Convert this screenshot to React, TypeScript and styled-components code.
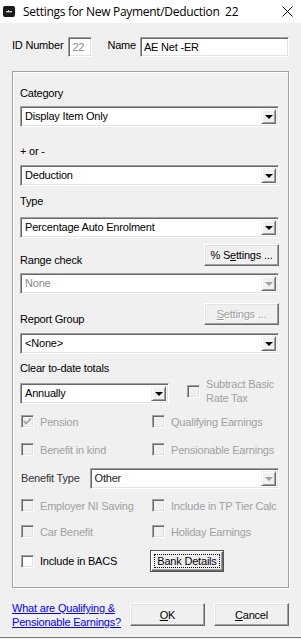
import { ReactNode } from "react";
import styled, { createGlobalStyle } from "styled-components";

const Global = createGlobalStyle`
  html, body {
    margin: 0;
    padding: 0;
    background: #f0f0f0;
  }
  body {
    font-family: "Liberation Sans", Arial, sans-serif;
    font-size: 11px;
    letter-spacing: -0.2px;
    color: #000;
  }
`;

const Window = styled.div`
  width: 301px;
  height: 638px;
  box-sizing: border-box;
  border-bottom: 1px solid #7a7a7a;
  background: #f0f0f0;
  display: flex;
  flex-direction: column;
`;

const TitleBar = styled.div`
  height: 23px;
  flex: none;
  background: #fff;
  display: flex;
  align-items: center;
  padding: 0 8px 0 3px;
  box-sizing: border-box;
`;

const TitleText = styled.div`
  font-family: "Open Sans", "Noto Sans", sans-serif;
  font-size: 12px;
  letter-spacing: -0.3px;
  margin-left: 8px;
  flex: 1;
`;

const Body = styled.div`
  display: flex;
  flex-direction: column;
  padding: 14px 12px 0 12px;
`;

const HeaderRow = styled.div`
  display: flex;
  align-items: flex-start;
  height: 21px;
  flex: none;
`;

const Text = styled.span<{ $mt?: number; $ml?: number; $color?: string }>`
  display: block;
  flex: none;
  line-height: 13px;
  white-space: nowrap;
  margin-top: ${(p) => p.$mt ?? 0}px;
  margin-left: ${(p) => p.$ml ?? 0}px;
  color: ${(p) => p.$color ?? "#000"};
`;

const Edit = styled.div<{ $width?: number; $color?: string }>`
  box-sizing: border-box;
  height: 20px;
  ${(p) => (p.$width ? `width: ${p.$width}px; flex: none;` : "flex: 1;")}
  background: #fff;
  border-style: solid;
  border-width: 1px;
  border-color: #a0a0a0 #fff #fff #a0a0a0;
  box-shadow: inset 1px 1px 0 #696969, inset -1px -1px 0 #e3e3e3;
  padding: 3px 0 0 3px;
  line-height: 13px;
  color: ${(p) => p.$color ?? "#000"};
`;

const Group = styled.div`
  margin-top: 13px;
  height: 517px;
  flex: none;
  box-sizing: border-box;
  border: 1px solid #a0a0a0;
  box-shadow: inset 1px 1px 0 #fff, 1px 1px 0 #fff;
  padding: 15px 9px 0 7px;
  display: flex;
  flex-direction: column;
`;

const ComboBox = styled.div<{ $mt?: number; $width?: number; $ml?: number; $grow?: boolean }>`
  box-sizing: border-box;
  height: 21px;
  margin-top: ${(p) => p.$mt ?? 0}px;
  margin-left: ${(p) => p.$ml ?? 0}px;
  ${(p) => (p.$width ? `width: ${p.$width}px;` : "")}
  flex: ${(p) => (p.$grow ? "1 1 0" : "none")};
  background: #fff;
  border-style: solid;
  border-width: 1px;
  border-color: #a0a0a0 #fff #fff #a0a0a0;
  box-shadow: inset 1px 1px 0 #696969, inset -1px -1px 0 #e3e3e3;
  padding: 2px;
  display: flex;
  align-items: stretch;
`;

const ComboValue = styled.div<{ $color?: string }>`
  flex: 1;
  padding-left: 2px;
  line-height: 15px;
  color: ${(p) => p.$color ?? "#000"};
  white-space: nowrap;
  overflow: hidden;
`;

const ArrowButton = styled.div`
  width: 15px;
  box-sizing: border-box;
  background: #f0f0f0;
  border-style: solid;
  border-width: 1px;
  border-color: #f0f0f0 #696969 #696969 #f0f0f0;
  box-shadow: inset 1px 1px 0 #fff, inset -1px -1px 0 #a0a0a0;
  display: flex;
  align-items: center;
  justify-content: center;
`;

const Triangle = styled.div<{ $disabled?: boolean }>`
  width: 0;
  height: 0;
  border-left: 4px solid transparent;
  border-right: 4px solid transparent;
  border-top: 4px solid ${(p) => (p.$disabled ? "#a0a0a0" : "#000")};
  margin-top: 1px;
`;

const Button = styled.div<{ $width?: number; $height?: number; $disabled?: boolean }>`
  box-sizing: border-box;
  width: ${(p) => p.$width ?? 75}px;
  height: ${(p) => p.$height ?? 23}px;
  background: #f0f0f0;
  border-style: solid;
  border-width: 1px;
  border-color: #fff #696969 #696969 #fff;
  box-shadow: inset -1px -1px 0 #a0a0a0, inset 1px 1px 0 #e3e3e3;
  display: flex;
  align-items: center;
  justify-content: center;
  color: ${(p) => (p.$disabled ? "#a0a0a0" : "#000")};
  text-shadow: ${(p) => (p.$disabled ? "1px 1px 0 #fff" : "none")};
  flex: none;
`;

const DefaultButton = styled(Button)`
  border: 1px solid #555;
  box-shadow: inset 1px 1px 0 #fff, inset -1px -1px 0 #696969, inset -2px -2px 0 #a0a0a0;
  padding: 3px;
`;

const Focus = styled.span`
  display: flex;
  align-items: center;
  justify-content: center;
  width: 100%;
  height: 100%;
  box-sizing: border-box;
  outline: 1px dotted #000;
  outline-offset: -1px;
`;

const Key = styled.u`
  text-decoration: underline;
  text-underline-offset: 1px;
`;

const Row = styled.div<{ $mt?: number; $align?: string; $justify?: string }>`
  display: flex;
  flex: none;
  align-items: ${(p) => p.$align ?? "center"};
  justify-content: ${(p) => p.$justify ?? "space-between"};
  margin-top: ${(p) => p.$mt ?? 0}px;
`;

const CheckGrid = styled.div<{ $mt?: number; $first?: number }>`
  display: grid;
  flex: none;
  grid-template-columns: ${(p) => p.$first ?? 131}px 1fr;
  margin-top: ${(p) => p.$mt ?? 0}px;
  align-items: center;
`;

const CheckItem = styled.div<{ $disabled?: boolean }>`
  display: flex;
  align-items: center;
  height: 13px;
  padding-left: 1px;
  color: ${(p) => (p.$disabled ? "#a0a0a0" : "#000")};
  white-space: nowrap;
`;

const Box = styled.div<{ $disabled?: boolean }>`
  width: 13px;
  height: 13px;
  box-sizing: border-box;
  flex: none;
  background: ${(p) => (p.$disabled ? "#f0f0f0" : "#fff")};
  border-style: solid;
  border-width: 1px;
  border-color: #a0a0a0 #fff #fff #a0a0a0;
  box-shadow: inset 1px 1px 0 #696969, inset -1px -1px 0 #e3e3e3;
  margin-right: 6px;
  display: flex;
  align-items: center;
  justify-content: center;
`;

const TwoLine = styled.span`
  display: block;
  margin-top: -6px;
  line-height: 14px;
  color: #a0a0a0;
  white-space: nowrap;
`;

const Footer = styled.div`
  display: flex;
  align-items: flex-start;
`;

const Link = styled.a`
  display: block;
  margin-top: 13px;
  color: #0000ff;
  text-decoration: underline;
  line-height: 14px;
  white-space: nowrap;
`;

const Buttons = styled.div`
  display: flex;
  gap: 9px;
  margin-left: auto;
  margin-top: 15px;
`;

const AppIcon = () => (
  <svg width="12" height="11" viewBox="0 0 12 11">
    <rect x="0" y="0" width="12" height="11" rx="2" fill="#1a1a1a" />
    <rect x="3" y="5" width="6" height="1.4" fill="#cfcfcf" />
    <rect x="5" y="4" width="1" height="1" fill="#cfcfcf" />
  </svg>
);

const CloseIcon = () => (
  <svg width="11" height="11" viewBox="0 0 11 11">
    <path d="M0.5 0.5 L10.5 10.5 M10.5 0.5 L0.5 10.5" stroke="#000" strokeWidth="1" />
  </svg>
);

const CheckMark = () => (
  <svg width="9" height="9" viewBox="0 0 9 9">
    <path d="M1 4 L3 6.5 L8 1.5" stroke="#a0a0a0" strokeWidth="1.6" fill="none" />
  </svg>
);

function Combo({
  value,
  mt,
  width,
  ml,
  grow,
  disabled,
  color,
}: {
  value: string;
  mt?: number;
  width?: number;
  ml?: number;
  grow?: boolean;
  disabled?: boolean;
  color?: string;
}) {
  return (
    <ComboBox $mt={mt} $width={width} $ml={ml} $grow={grow}>
      <ComboValue $color={color}>{value}</ComboValue>
      <ArrowButton>
        <Triangle $disabled={disabled} />
      </ArrowButton>
    </ComboBox>
  );
}

function Check({
  label,
  disabled,
  checked,
}: {
  label: ReactNode;
  disabled?: boolean;
  checked?: boolean;
}) {
  return (
    <CheckItem $disabled={disabled}>
      <Box $disabled={disabled}>{checked && <CheckMark />}</Box>
      {label}
    </CheckItem>
  );
}

const RowLabel = styled(Text)`
  margin-bottom: -1px;
`;

export default function App() {
  return (
    <>
      <Global />
      <Window>
        <TitleBar>
          <AppIcon />
          <TitleText>Settings for New Payment/Deduction&nbsp; 22</TitleText>
          <CloseIcon />
        </TitleBar>
        <Body>
          <HeaderRow>
            <Text $mt={2}>ID Number</Text>
            <Edit $width={24} $color="#8a8a8a" style={{ marginLeft: 5 }}>
              22
            </Edit>
            <Text $mt={2} $ml={15}>
              Name
            </Text>
            <Edit style={{ marginLeft: 4 }}>AE Net -ER</Edit>
          </HeaderRow>

          <Group>
            <Text>Category</Text>
            <Combo mt={6} value="Display Item Only" />
            <Text $mt={18}>+ or -</Text>
            <Combo mt={7} value="Deduction" />
            <Text $mt={9}>Type</Text>
            <Combo mt={9} value="Percentage Auto Enrolment" />

            <Row $mt={6} $align="flex-end">
              <RowLabel>Range check</RowLabel>
              <Button $height={22}>
                %&nbsp;S<Key>e</Key>ttings ...
              </Button>
            </Row>
            <Combo mt={7} value="None" disabled color="#8a8a8a" />

            <Row $mt={9} $align="flex-end">
              <RowLabel>Report Group</RowLabel>
              <Button $height={22} $disabled>
                <Key>S</Key>ettings ...
              </Button>
            </Row>
            <Combo mt={8} value="<None>" />

            <Text $mt={8}>Clear to-date totals</Text>
            <Row $mt={8} $align="flex-start" $justify="flex-start">
              <Combo width={149} value="Annually" />
              <CheckItem $disabled style={{ marginLeft: 17, marginTop: 2 }}>
                <Box $disabled />
              </CheckItem>
              <TwoLine>
                Subtract Basic
                <br />
                Rate Tax
              </TwoLine>
            </Row>

            <CheckGrid $mt={10}>
              <Check disabled checked label="Pension" />
              <Check disabled label="Qualifying Earnings" />
            </CheckGrid>
            <CheckGrid $mt={15}>
              <Check disabled label="Benefit in kind" />
              <Check disabled label="Pensionable Earnings" />
            </CheckGrid>

            <Row $mt={12} $justify="flex-start">
              <Text $ml={1} $color="#333">
                Benefit Type
              </Text>
              <Combo ml={10} grow value="Other" disabled color="#222" />
            </Row>

            <CheckGrid $mt={10}>
              <Check disabled label="Employer NI Saving" />
              <Check disabled label="Include in TP Tier Calc" />
            </CheckGrid>
            <CheckGrid $mt={13}>
              <Check disabled label="Car Benefit" />
              <Check disabled label="Holiday Earnings" />
            </CheckGrid>
            <CheckGrid $mt={12} $first={130}>
              <Check label="Include in BACS" />
              <DefaultButton $width={74} $height={22}>
                <Focus>Bank Details</Focus>
              </DefaultButton>
            </CheckGrid>
          </Group>

          <Footer>
            <Link href="#">
              What are Qualifying &amp;
              <br />
              Pensionable Earnings?
            </Link>
            <Buttons>
              <Button>
                <Key>O</Key>K
              </Button>
              <Button>
                <Key>C</Key>ancel
              </Button>
            </Buttons>
          </Footer>
        </Body>
      </Window>
    </>
  );
}
